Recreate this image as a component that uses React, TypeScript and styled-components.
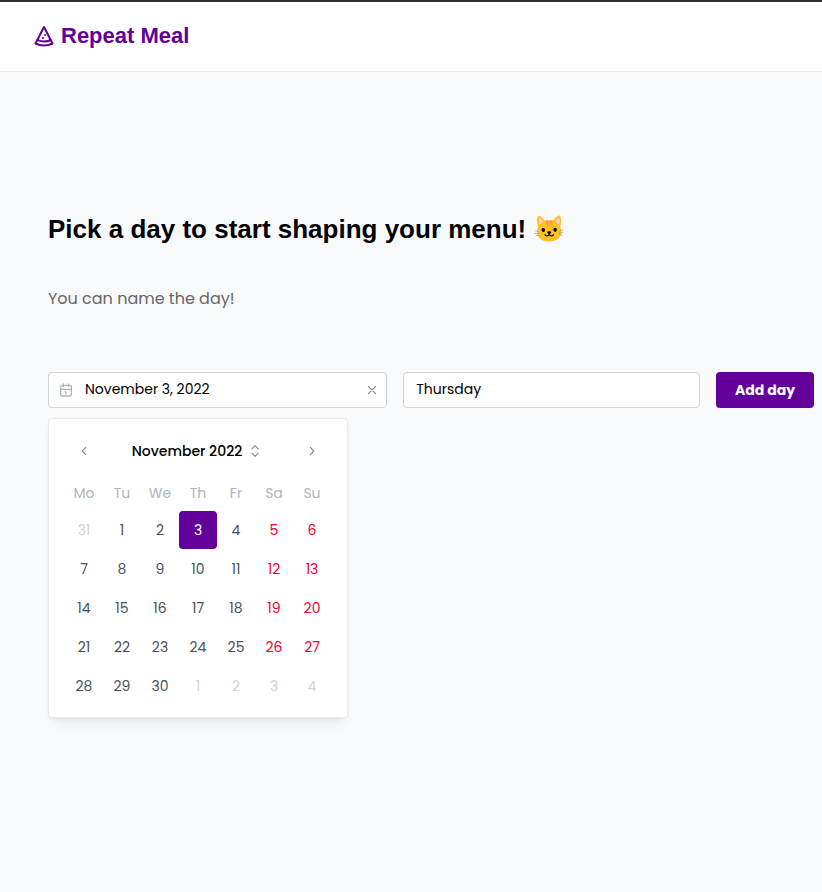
import React, { useState } from "react";
import styled, { createGlobalStyle } from "styled-components";

const purple = "#620099";
const bodyFont = `Poppins, Inter, "Noto Sans", sans-serif`;
const headingFont = `"Liberation Sans", Arial, sans-serif`;

const GlobalStyle = createGlobalStyle`
  *, *::before, *::after { box-sizing: border-box; }
  body {
    margin: 0;
    background: #f8f9fb;
    color: #000;
    font-family: ${bodyFont};
    font-size: 14px;
  }
  button, input { font: inherit; color: inherit; margin: 0; }
`;

const Page = styled.div`
  min-height: 100vh;
  border-top: 2px solid #343036;
`;

const Header = styled.header`
  display: flex;
  align-items: center;
  height: 70px;
  padding: 0 32px 2px;
  background: #fff;
  border-bottom: 1px solid #e9ecef;
`;

const Brand = styled.a`
  display: flex;
  align-items: center;
  gap: 5px;
  color: ${purple};
  font: bold 22px/32px ${headingFont};
  text-decoration: none;
`;

const Main = styled.main`
  padding: 139px 8px 48px 48px;
`;

const Title = styled.h1`
  margin: 0;
  font: bold 26px/36px ${headingFont};
`;

const Hint = styled.p`
  margin: 38px 0 59px;
  color: #666;
  font-size: 16px;
  line-height: 28px;
`;

const Form = styled.form`
  display: grid;
  grid-template-columns: 8fr 7fr 98px;
  gap: 16px;
`;

const Field = styled.div`
  display: flex;
  align-items: center;
  min-width: 0;
  height: 36px;
  border: 1px solid #ced4da;
  border-radius: 4px;
  background: #fff;
`;

const FieldIcon = styled.span`
  display: flex;
  padding-left: 9px;
  color: #adb5bd;
`;

const TextInput = styled.input<{ $afterIcon?: boolean }>`
  flex: 1;
  min-width: 0;
  height: 34px;
  padding: 0 12px 2px ${(p) => (p.$afterIcon ? 11 : 12)}px;
  border: 0;
  outline: 0;
  background: transparent;
`;

const IconButton = styled.button<{ $width: number }>`
  display: flex;
  align-items: center;
  justify-content: center;
  width: ${(p) => p.$width}px;
  height: 32px;
  padding: 0;
  border: 0;
  background: transparent;
  color: #868e96;
  cursor: pointer;
`;

const SubmitButton = styled.button`
  height: 36px;
  padding: 0;
  border: 0;
  border-radius: 4px;
  background: ${purple};
  color: #fff;
  font-weight: 700;
  cursor: pointer;
`;

const Calendar = styled.section`
  width: 300px;
  margin-top: 10px;
  padding: 16px 16px 11px;
  border: 1px solid #e9ecef;
  border-radius: 4px;
  background: #fff;
  box-shadow: 0 1px 3px rgba(0, 0, 0, 0.05), 0 10px 15px -5px rgba(0, 0, 0, 0.05),
    0 7px 7px -5px rgba(0, 0, 0, 0.04);
`;

const CalendarHeader = styled.div`
  display: flex;
  align-items: center;
  justify-content: space-between;
  margin-bottom: 8px;
`;

const MonthButton = styled.button`
  display: flex;
  align-items: center;
  gap: 6px;
  height: 32px;
  padding: 0 2px 0 0;
  border: 0;
  background: transparent;
  font-weight: 500;
  cursor: pointer;

  svg { color: #868e96; }
`;

const MonthTable = styled.table`
  width: 100%;
  border-collapse: collapse;
  table-layout: fixed;

  th {
    height: 36px;
    padding: 0;
    color: #adb5bd;
    font-weight: 400;
  }
  td { height: 39px; padding: 0 0 1px; }
`;

const DayButton = styled.button<{ $selected: boolean; $weekend: boolean; $outside: boolean }>`
  display: block;
  width: 100%;
  height: 38px;
  padding: 0;
  border: 0;
  border-radius: 4px;
  background: ${(p) => (p.$selected ? purple : "transparent")};
  color: ${(p) =>
    p.$selected ? "#fff" : p.$outside ? "#ced4da" : p.$weekend ? "#f00034" : "#495057"};
  cursor: pointer;
`;

const PizzaIcon = () => (
  <svg width="24" height="24" viewBox="0 0 24 24" fill="none" stroke="currentColor" strokeWidth="2" strokeLinecap="round" strokeLinejoin="round" aria-hidden="true">
    <path d="M12 21.5c-3.04 0-5.952-.714-8.5-1.983L12 3l8.5 16.517A19.09 19.09 0 0 1 12 21.5z" />
    <path d="M5.38 15.866A14.94 14.94 0 0 0 12.195 17.5a14.944 14.944 0 0 0 6.502-1.479M13 11.01V11M11 14v-.01" />
  </svg>
);

const CalendarIcon = () => (
  <svg width="16" height="16" viewBox="0 0 24 24" fill="none" stroke="currentColor" strokeWidth="2" strokeLinecap="round" strokeLinejoin="round" aria-hidden="true">
    <rect x="4" y="5" width="16" height="16" rx="2" />
    <path d="M16 3v4M8 3v4M4 11h16M11 15h1M12 15v3" />
  </svg>
);

const CloseIcon = () => (
  <svg width="16" height="16" viewBox="0 0 16 16" fill="none" stroke="currentColor" strokeWidth="1.3" strokeLinecap="round" aria-hidden="true">
    <path d="m4.4 4.4 7.2 7.2m0-7.2-7.2 7.2" />
  </svg>
);

const Chevron = ({ d }: { d: string }) => (
  <svg width="14" height="14" viewBox="0 0 14 14" fill="none" stroke="currentColor" strokeWidth="1.2" strokeLinecap="round" strokeLinejoin="round" aria-hidden="true">
    <path d={d} />
  </svg>
);

const weekdays = ["Mo", "Tu", "We", "Th", "Fr", "Sa", "Su"];
const weeks = Array.from({ length: 5 }, (_, w) =>
  Array.from({ length: 7 }, (_, d) => w * 7 + d)
);

export default function App() {
  const [date, setDate] = useState("November 3, 2022");
  const [name, setName] = useState("Thursday");
  const [selected, setSelected] = useState(3);

  const pick = (day: number) => {
    const value = new Date(2022, 10, day);
    setSelected(day);
    setDate(value.toLocaleDateString("en-US", { month: "long", day: "numeric", year: "numeric" }));
    setName(value.toLocaleDateString("en-US", { weekday: "long" }));
  };

  return (
    <Page>
      <GlobalStyle />
      <Header>
        <Brand href="#"><PizzaIcon />Repeat Meal</Brand>
      </Header>
      <Main>
        <Title>Pick a day to start shaping your menu! 🐱</Title>
        <Hint>You can name the day!</Hint>
        <Form onSubmit={(e) => e.preventDefault()}>
          <Field>
            <FieldIcon><CalendarIcon /></FieldIcon>
            <TextInput $afterIcon aria-label="Date" value={date} onChange={(e) => setDate(e.target.value)} />
            <IconButton type="button" $width={28} aria-label="Clear date" onClick={() => setDate("")}>
              <CloseIcon />
            </IconButton>
          </Field>
          <Field>
            <TextInput aria-label="Day name" value={name} onChange={(e) => setName(e.target.value)} />
          </Field>
          <SubmitButton type="submit">Add day</SubmitButton>
        </Form>
        <Calendar aria-label="Calendar">
          <CalendarHeader>
            <IconButton type="button" $width={38} aria-label="Previous month">
              <Chevron d="M8.7 3.4 5.2 7l3.500 3.600" />
            </IconButton>
            <MonthButton type="button">
              November 2022
              <Chevron d="M3.900 4.800 7 1.700l3.100 3.100M3.900 9.200 7 12.300l3.100-3.100" />
            </MonthButton>
            <IconButton type="button" $width={38} aria-label="Next month">
              <Chevron d="M5.300 3.400 8.800 7l-3.500 3.600" />
            </IconButton>
          </CalendarHeader>
          <MonthTable>
            <thead>
              <tr>{weekdays.map((d) => <th key={d} scope="col">{d}</th>)}</tr>
            </thead>
            <tbody>
              {weeks.map((week) => (
                <tr key={week[0]}>
                  {week.map((day, col) => (
                    <td key={day}>
                      <DayButton
                        type="button"
                        $selected={day === selected}
                        $weekend={col > 4}
                        $outside={day < 1 || day > 30}
                        onClick={() => pick(day)}
                      >
                        {new Date(2022, 10, day).getDate()}
                      </DayButton>
                    </td>
                  ))}
                </tr>
              ))}
            </tbody>
          </MonthTable>
        </Calendar>
      </Main>
    </Page>
  );
}
